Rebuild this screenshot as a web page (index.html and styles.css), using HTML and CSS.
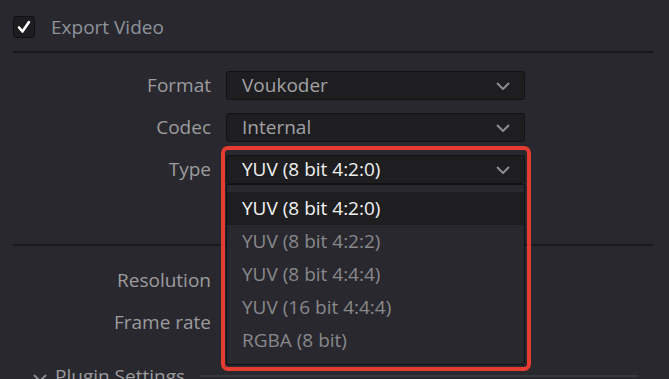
FILE: index.html
```html
<!DOCTYPE html>
<html>
<head>
<meta charset="utf-8">
<link rel="stylesheet" href="styles.css">
</head>
<body>
<div class="panel">
  <div class="header">
    <span class="checkbox">
      <svg viewBox="0 0 22 22" width="22" height="22"><path d="M5.5 11.5 L9.3 16 L16.5 5.5" fill="none" stroke="#fff" stroke-width="2.8" stroke-linecap="round" stroke-linejoin="round"/></svg>
    </span>
    <span class="title">Export Video</span>
  </div>
  <div class="form">
    <div class="label">Format</div>
    <div class="select"><span>Voukoder</span><svg class="chev" viewBox="0 0 14 8" width="14" height="8"><path d="M1 1 L7 7 L13 1" fill="none" stroke="#8d8d90" stroke-width="2"/></svg></div>
    <div class="label">Codec</div>
    <div class="select"><span>Internal</span><svg class="chev" viewBox="0 0 14 8" width="14" height="8"><path d="M1 1 L7 7 L13 1" fill="none" stroke="#8d8d90" stroke-width="2"/></svg></div>
    <div class="label">Type</div>
    <div class="type-cell">
      <div class="select active"><span>YUV (8 bit 4:2:0)</span><svg class="chev" viewBox="0 0 14 8" width="14" height="8"><path d="M1 1 L7 7 L13 1" fill="none" stroke="#8d8d90" stroke-width="2"/></svg></div>
      <ul class="popup">
        <li class="current">YUV (8 bit 4:2:0)</li>
        <li>YUV (8 bit 4:2:2)</li>
        <li>YUV (8 bit 4:4:4)</li>
        <li>YUV (16 bit 4:4:4)</li>
        <li>RGBA (8 bit)</li>
      </ul>
      <div class="highlight"></div>
    </div>
  </div>
  <div class="divider"></div>
  <div class="form second">
    <div class="label">Resolution</div>
    <div class="select"></div>
    <div class="label">Frame rate</div>
    <div class="select"></div>
  </div>
  <div class="section">
    <svg class="sec-chev" viewBox="0 0 14 8" width="14" height="8"><path d="M1 1 L7 7 L13 1" fill="none" stroke="#8d8d90" stroke-width="2"/></svg>
    <span class="sec-title">Plugin Settings</span>
    <span class="sec-line"></span>
  </div>
</div>
</body>
</html>
```
FILE: styles.css
```css
html, body {
  margin: 0;
  padding: 0;
  background: #29282e;
  overflow: hidden;
}
body {
  width: 669px;
  height: 379px;
  font-family: "Open Sans", "Noto Sans", sans-serif;
  font-size: 19px;
  color: #9c9c9e;
}
.panel {
  padding: 0 16px 0 13px;
}
.header {
  height: 51px;
  display: flex;
  align-items: center;
  gap: 16px;
  border-bottom: 2px solid #19181c;
}
.checkbox {
  width: 20px;
  height: 20px;
  border: 1px solid #111113;
  border-radius: 3px;
  background: #1d1d20;
  display: flex;
  align-items: center;
  justify-content: center;
  margin-top: 3px;
}
.checkbox svg { display: block; width: 20px; height: 20px; }
.title {
  color: #8d949a;
  margin-top: 2px;
}
.form {
  display: grid;
  grid-template-columns: 198px 299px;
  column-gap: 15px;
  row-gap: 13px;
  align-items: center;
  padding-top: 18px;
}
.form.second {
  padding-top: 20px;
}
.label {
  text-align: right;
  color: #9c9c9e;
  line-height: 29px;
}
.select {
  height: 27px;
  border: 1px solid #121214;
  border-radius: 3px;
  background: #1e1e21;
  display: flex;
  align-items: center;
  justify-content: space-between;
  padding: 0 14px 0 15px;
  color: #a2a2a4;
}
.select span { line-height: 27px; }
.select.active { color: #f0f0f0; }
.chev { display: block; }
.type-cell {
  position: relative;
}
.popup {
  position: absolute;
  left: 0;
  top: 29px;
  width: 297px;
  margin: 0;
  padding: 7px 0 7px;
  list-style: none;
  background: #29282e;
  border: 1px solid #111113;
  border-radius: 0 0 3px 3px;
  z-index: 2;
}
.popup li {
  height: 33px;
  line-height: 33px;
  padding-left: 15px;
  color: #88888c;
}
.popup li.current {
  background: #1e1e21;
  color: #f2f2f2;
}
.highlight {
  position: absolute;
  left: -5px;
  top: -9px;
  width: 302px;
  height: 217px;
  border: 4px solid #e63b30;
  border-radius: 7px;
  z-index: 3;
}
.divider {
  margin-top: 60px;
  height: 2px;
  background: #19181c;
}
.section {
  display: flex;
  align-items: center;
  gap: 8px;
  margin-top: 26px;
  padding-left: 20px;
}
.sec-chev { display: block; margin-top: 4px; }
.sec-title { color: #9c9c9e; white-space: nowrap; }
.sec-line {
  flex: 1;
  height: 2px;
  background: #38373d;
  margin-left: 8px;
  margin-right: 15px;
}
```
